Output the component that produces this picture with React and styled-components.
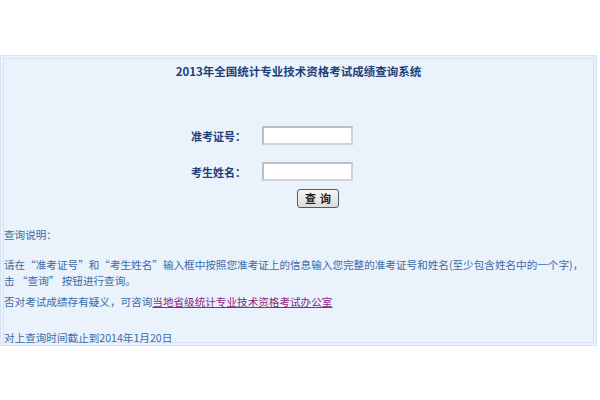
import React from 'react'
import styled, { createGlobalStyle } from "styled-components";

const Global = createGlobalStyle`
    body {
        margin: 0;
        background: #ffffff;
        font-family: "Noto Sans CJK SC", "DejaVu Sans", sans-serif;
    }
`;

const Page = styled.div`
    width: 600px;
    height: 400px;
    padding-top: 55px;
    box-sizing: border-box;
    overflow: hidden;
`;

const Panel = styled.div`
    width: 597px;
    height: 291px;
    box-sizing: border-box;
    background: #eaf2fc;
    border: 4px double #d4e3f5;
`;

const Title = styled.h3`
    margin: 0;
    padding-top: 4px;
    text-align: center;
    font-size: 11.5px;
    line-height: 16px;
    font-weight: bold;
    color: #1f3f78;
`;

const Form = styled.div`
    display: grid;
    grid-template-columns: 64px 91px;
    column-gap: 7px;
    row-gap: 17px;
    align-items: center;
    margin: 47px 0 0 187px;
`;

const Label = styled.label`
    font-size: 11px;
    font-weight: bold;
    color: #1f3f78;
    text-align: left;
`;

const Input = styled.input`
    width: 91px;
    height: 19px;
    box-sizing: border-box;
    border: 2px solid #b9c0c8;
    border-right-color: #cdd3d9;
    border-bottom-color: #cdd3d9;
    background: #ffffff;
    margin: 0;
    padding: 0;
`;

const ButtonRow = styled.div`
    padding: 8px 0 0 293px;
`;

const Button = styled.button`
    display: block;
    width: 42px;
    height: 19px;
    padding: 0;
    box-sizing: border-box;
    border: 1px solid #555b62;
    border-radius: 3px;
    background: linear-gradient(#f6f6f6, #dcdcdc);
    font-family: "Noto Sans CJK SC", sans-serif;
    font-size: 11px;
    line-height: 15px;
    font-weight: bold;
    color: #222222;
    letter-spacing: 4px;
    text-indent: 4px;
`;

const Notes = styled.div`
    margin-top: 19px;
    font-size: 10.6px;
    line-height: 16px;
    color: #3c6aa6;
    white-space: nowrap;
`;

const Note = styled.p`
    margin: 0 0 ${p => p.gap || 0}px 0;
`;

const Link = styled.a`
    color: #8a2a7d;
    text-decoration: underline;
`;

const App = () => {
    return (
        <Page>
            <Global />
            <Panel>
                <Title>2013年全国统计专业技术资格考试成绩查询系统</Title>
                <Form>
                    <Label>准考证号：</Label>
                    <Input type="text" />
                    <Label>考生姓名：</Label>
                    <Input type="text" />
                </Form>
                <ButtonRow>
                    <Button>查询</Button>
                </ButtonRow>
                <Notes>
                    <Note gap={14}>查询说明：</Note>
                    <Note>请在“准考证号”和“考生姓名”输入框中按照您准考证上的信息输入您完整的准考证号和姓名(至少包含姓名中的一个字)，</Note>
                    <Note gap={5}>击 “查询” 按钮进行查询。</Note>
                    <Note gap={20}>否对考试成绩存有疑义，可咨询<Link href="#">当地省级统计专业技术资格考试办公室</Link></Note>
                    <Note>对上查询时间截止到2014年1月20日</Note>
                </Notes>
            </Panel>
        </Page>
    )
}

export default App
